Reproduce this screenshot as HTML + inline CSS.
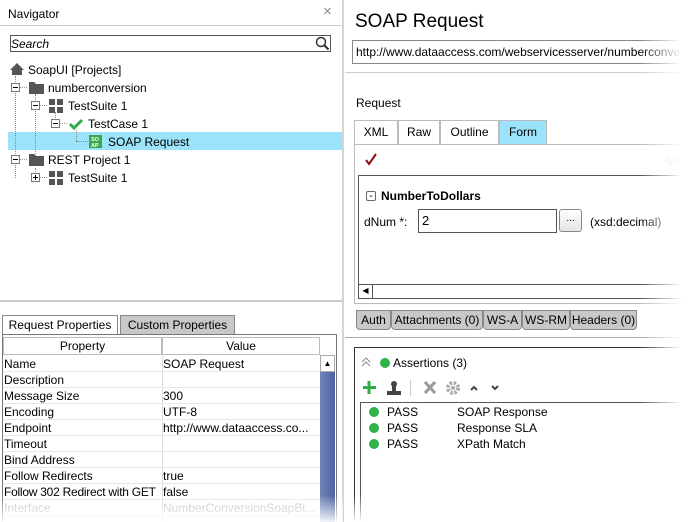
<!DOCTYPE html>
<html><head><style>
*{margin:0;padding:0;box-sizing:border-box;white-space:nowrap}
html,body{width:689px;height:522px;overflow:hidden}
body{background:#fff;font-family:"Liberation Sans",sans-serif;font-size:12px;color:#000;position:relative}
.a{position:absolute}
.sg{font-family:"Liberation Sans",sans-serif;font-size:12px}
.row{position:absolute;left:3px;width:317px;height:16px;border-bottom:1px solid #e8e8e8}
.row span{position:absolute;top:1px}
.tab{position:absolute;border:1px solid #bbb;border-bottom:none;text-align:center;line-height:22px}
.bt{position:absolute;top:310px;height:20px;border:1px solid #888;border-radius:0 0 4px 4px;background:#c8c8c8;line-height:18px;text-align:center}
.dot{position:absolute;width:10px;height:10px;border-radius:50%;background:#2eb34a}
</style></head><body>
<div class="a" style="left:0;top:0;width:344px;height:522px;border-right:2px solid #d4d4d4"></div>
<div class="a sg" style="left:8px;top:7px">Navigator</div>
<div class="a" style="left:323px;top:3px;color:#888;font-size:15px">×</div>
<div class="a" style="left:0;top:25px;width:343px;height:1px;background:#ccc"></div>
<div class="a" style="left:10px;top:35px;width:321px;height:17px;border:1px solid #555"></div>
<div class="a sg" style="left:11px;top:37px;font-style:italic">Search</div>
<svg class="a" style="left:315px;top:36px" width="15" height="15"><circle cx="6" cy="6" r="4.5" fill="none" stroke="#333" stroke-width="1.5"/><line x1="9.5" y1="9.5" x2="13.5" y2="13.5" stroke="#333" stroke-width="2"/></svg>
<div class="a" style="left:8px;top:132px;width:334px;height:18px;background:#9be3fa"></div>
<div class="a" style="left:15px;top:76px;height:102px;border-left:1px dotted #888"></div>
<div class="a" style="left:35px;top:94px;height:66px;border-left:1px dotted #888"></div>
<div class="a" style="left:35px;top:168px;height:10px;border-left:1px dotted #888"></div>
<div class="a" style="left:55px;top:112px;height:10px;border-left:1px dotted #888"></div>
<div class="a" style="left:76px;top:130px;height:11px;border-left:1px dotted #888"></div>
<div class="a" style="left:76px;top:141px;width:12px;border-top:1px dotted #888"></div>
<svg class="a" style="left:0;top:60px" width="160" height="130">
<g fill="#fff" stroke="#777">
<rect x="11.5" y="23.5" width="8" height="8"/><rect x="31.5" y="41.5" width="8" height="8"/><rect x="51.5" y="59.5" width="8" height="8"/><rect x="11.5" y="95.5" width="8" height="8"/><rect x="31.5" y="113.5" width="8" height="8"/></g>
<g stroke="#000"><line x1="13" y1="27.5" x2="18" y2="27.5"/><line x1="33" y1="45.5" x2="38" y2="45.5"/><line x1="53" y1="63.5" x2="58" y2="63.5"/><line x1="13" y1="99.5" x2="18" y2="99.5"/><line x1="33" y1="117.5" x2="38" y2="117.5"/><line x1="35.5" y1="115" x2="35.5" y2="120"/></g>
<g stroke="#999" stroke-dasharray="1,1"><line x1="20" y1="27.5" x2="28" y2="27.5"/><line x1="40" y1="45.5" x2="48" y2="45.5"/><line x1="60" y1="63.5" x2="68" y2="63.5"/><line x1="20" y1="99.5" x2="28" y2="99.5"/><line x1="40" y1="117.5" x2="48" y2="117.5"/></g>
<path d="M10 10 L17 3 L24 10 L22 10 L22 15 L12 15 L12 10Z" fill="#555"/>
<path d="M29 22 h5 l2 2 h8 v10 h-15z" fill="#555"/><path d="M29 94 h5 l2 2 h8 v10 h-15z" fill="#555"/>
<g fill="#555"><rect x="49" y="39" width="6" height="6"/><rect x="57" y="39" width="6" height="6"/><rect x="49" y="47" width="6" height="6"/><rect x="57" y="47" width="6" height="6"/>
<rect x="49" y="111" width="6" height="6"/><rect x="57" y="111" width="6" height="6"/><rect x="49" y="119" width="6" height="6"/><rect x="57" y="119" width="6" height="6"/></g>
<path d="M70 64 l4 4 l8 -8" fill="none" stroke="#2eae48" stroke-width="3"/>
<rect x="89" y="75" width="13" height="13" fill="#39a84a"/>
<text x="91" y="81" font-size="5.5" fill="#fff" font-family="Liberation Sans" font-weight="bold">SO</text><text x="91" y="87" font-size="5.5" fill="#fff" font-family="Liberation Sans" font-weight="bold">AP</text>
</svg>
<div class="a sg" style="left:28px;top:63px">SoapUI [Projects]</div>
<div class="a sg" style="left:48px;top:81px">numberconversion</div>
<div class="a sg" style="left:68px;top:99px">TestSuite 1</div>
<div class="a sg" style="left:88px;top:117px">TestCase 1</div>
<div class="a sg" style="left:108px;top:135px">SOAP Request</div>
<div class="a sg" style="left:48px;top:153px">REST Project 1</div>
<div class="a sg" style="left:68px;top:171px">TestSuite 1</div>
<div class="a" style="left:0;top:300px;width:343px;height:2px;background:#ccc"></div>
<div class="a sg" style="left:2px;top:315px;width:116px;height:19px;border:1px solid #888;border-bottom:none;background:#fff;text-align:center;line-height:18px">Request Properties</div>
<div class="a sg" style="left:120px;top:315px;width:115px;height:19px;border:1px solid #888;border-bottom:none;background:#c8c8c8;text-align:center;line-height:18px">Custom Properties</div>
<div class="a" style="left:2px;top:334px;width:335px;height:190px;border:1px solid #777;border-bottom:none"></div>
<div class="a sg" style="left:3px;top:337px;width:159px;height:18px;border:1px solid #bbb;text-align:center;line-height:16px">Property</div>
<div class="a sg" style="left:162px;top:337px;width:158px;height:18px;border:1px solid #bbb;text-align:center;line-height:16px">Value</div>
<div class="a" style="left:320px;top:355px;width:15px;height:170px;background:linear-gradient(90deg,#7084b8,#4d62a0)"></div>
<div class="a" style="left:320px;top:355px;width:15px;height:17px;background:#fff;border:1px solid #aaa;font-size:8px;text-align:center;line-height:15px">▲</div>
<div class="a" style="left:162px;top:355px;width:1px;height:170px;background:#ddd"></div>
<div class="row sg" style="top:356px"><span style="left:1px">Name</span><span style="left:160px">SOAP Request</span></div>
<div class="row sg" style="top:372px"><span style="left:1px">Description</span></div>
<div class="row sg" style="top:388px"><span style="left:1px">Message Size</span><span style="left:160px">300</span></div>
<div class="row sg" style="top:404px"><span style="left:1px">Encoding</span><span style="left:160px">UTF-8</span></div>
<div class="row sg" style="top:420px"><span style="left:1px">Endpoint</span><span style="left:160px">http://www.dataaccess.co...</span></div>
<div class="row sg" style="top:436px"><span style="left:1px">Timeout</span></div>
<div class="row sg" style="top:452px"><span style="left:1px">Bind Address</span></div>
<div class="row sg" style="top:468px"><span style="left:1px">Follow Redirects</span><span style="left:160px">true</span></div>
<div class="row sg" style="top:484px"><span style="left:1px;letter-spacing:-0.25px">Follow 302 Redirect with GET</span><span style="left:160px">false</span></div>
<div class="row sg" style="top:500px;color:#bbb"><span style="left:1px">Interface</span><span style="left:160px">NumberConversionSoapBi...</span></div>
<div class="a" style="left:0;top:495px;width:343px;height:27px;background:linear-gradient(rgba(255,255,255,0),rgba(255,255,255,0.9))"></div>
<div class="a" style="left:355px;top:11px;font-size:19px">SOAP Request</div>
<div class="a sg" style="left:352px;top:40px;width:337px;height:24px;border:1px solid #888;padding:4px 0 0 3px;overflow:hidden">http://www.dataaccess.com/webservicesserver/numberconversion</div>
<div class="a" style="left:345px;top:72px;width:344px;height:1px;background:#ccc"></div>
<div class="a sg" style="left:356px;top:96px">Request</div>
<div class="a sg tab" style="left:354px;top:120px;width:44px;height:25px">XML</div>
<div class="a sg tab" style="left:398px;top:120px;width:42px;height:25px">Raw</div>
<div class="a sg tab" style="left:440px;top:120px;width:59px;height:25px">Outline</div>
<div class="a sg tab" style="left:499px;top:120px;width:48px;height:25px;background:#9be3fa">Form</div>
<div class="a" style="left:354px;top:144px;width:335px;height:160px;border:1px solid #bbb;border-right:none"></div>
<svg class="a" style="left:364px;top:152px" width="14" height="14"><path d="M2 8 L5 12 L12 2" fill="none" stroke="#8b1010" stroke-width="2"/></svg>
<div class="a sg" style="left:666px;top:155px;color:#ccc">View</div>
<div class="a" style="left:358px;top:175px;width:331px;height:124px;border:1px solid #555;border-right:none"></div>
<div class="a" style="left:366px;top:191px;width:10px;height:10px;border:1px solid #666;border-radius:2px;font-size:7px;text-align:center;line-height:8px">⌄</div>
<div class="a sg" style="left:381px;top:189px;font-weight:bold">NumberToDollars</div>
<div class="a sg" style="left:364px;top:215px">dNum *:</div>
<div class="a sg" style="left:418px;top:209px;width:139px;height:24px;border:1px solid #555;padding:3px 0 0 3px;font-size:13px">2</div>
<div class="a" style="left:559px;top:209px;width:23px;height:23px;border:1px solid #888;border-radius:3px;background:linear-gradient(#fff,#e4e4e4);font-size:10px;text-align:center;line-height:18px">...</div>
<div class="a sg" style="left:590px;top:215px">(xsd:decimal)</div>
<div class="a" style="left:359px;top:284px;width:330px;height:1px;background:#555"></div>
<div class="a" style="left:359px;top:284px;width:14px;height:14px;border-right:1px solid #555;font-size:8px;text-align:center;line-height:14px">◀</div>
<div class="bt sg" style="left:356px;width:35px">Auth</div>
<div class="bt sg" style="left:391px;width:92px">Attachments (0)</div>
<div class="bt sg" style="left:483px;width:39px">WS-A</div>
<div class="bt sg" style="left:522px;width:48px">WS-RM</div>
<div class="bt sg" style="left:570px;width:67px">Headers (0)</div>
<div class="a" style="left:345px;top:337px;width:344px;height:1px;background:#aaa"></div>
<div class="a" style="left:354px;top:347px;width:335px;height:175px;border-left:1px solid #333;border-top:1px solid #333"></div>
<svg class="a" style="left:361px;top:357px" width="10" height="10"><path d="M1 5l4-4 4 4M1 9l4-4 4 4" fill="none" stroke="#888"/></svg>
<div class="dot" style="left:380px;top:358px"></div>
<div class="a sg" style="left:393px;top:356px">Assertions (3)</div>
<svg class="a" style="left:362px;top:379px" width="150" height="18">
<path d="M7 2v13M1 8.5h13" stroke="#2eae48" stroke-width="3"/>
<circle cx="32" cy="5" r="3" fill="#444"/><rect x="30" y="7" width="4" height="5" fill="#444"/><rect x="25" y="12" width="14" height="4" fill="#444"/>
<line x1="48.5" y1="1" x2="48.5" y2="17" stroke="#ccc"/>
<path d="M63 3l10 11M73 3l-10 11" stroke="#999" stroke-width="3"/>
<circle cx="91" cy="9" r="5" fill="none" stroke="#aaa" stroke-width="4" stroke-dasharray="2.5,1.5"/><circle cx="91" cy="9" r="2" fill="#aaa"/>
<path d="M109 11l3-3 3 3" fill="none" stroke="#444" stroke-width="2"/><path d="M130 7l3 3 3-3" fill="none" stroke="#444" stroke-width="2"/>
</svg>
<div class="a" style="left:360px;top:402px;width:329px;height:120px;border-left:1px solid #555;border-top:1px solid #555"></div>
<div class="dot" style="left:369px;top:407px"></div><div class="a sg" style="left:387px;top:405px">PASS</div><div class="a sg" style="left:457px;top:405px">SOAP Response</div>
<div class="dot" style="left:369px;top:423px"></div><div class="a sg" style="left:387px;top:421px">PASS</div><div class="a sg" style="left:457px;top:421px">Response SLA</div>
<div class="dot" style="left:369px;top:439px"></div><div class="a sg" style="left:387px;top:437px">PASS</div><div class="a sg" style="left:457px;top:437px">XPath Match</div>
<div class="a" style="left:640px;top:0;width:49px;height:522px;background:linear-gradient(90deg,rgba(255,255,255,0),#fff 85%)"></div>
<div class="a" style="left:345px;top:495px;width:344px;height:27px;background:linear-gradient(rgba(255,255,255,0),#fff)"></div>
</body></html>
